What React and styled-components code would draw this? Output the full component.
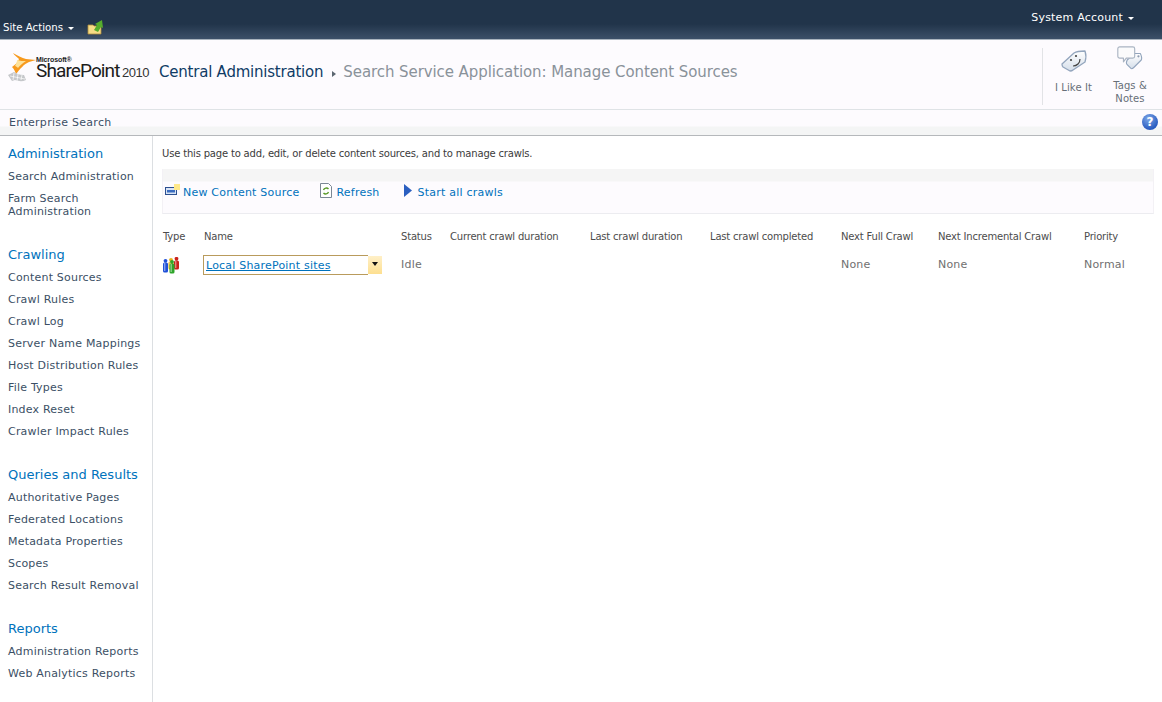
import React from "react";
import styled, { createGlobalStyle } from "styled-components";

const GlobalStyle = createGlobalStyle`
  html, body {
    margin: 0;
    padding: 0;
    background: #fff;
  }
  body {
    font-family: "DejaVu Sans", Verdana, sans-serif;
    font-size: 11px;
    color: #3b4f65;
  }
`;

const Page = styled.div`
  width: 1162px;
  height: 702px;
  display: flex;
  flex-direction: column;
  overflow: hidden;
`;

const TopBar = styled.div`
  height: 39px;
  flex: none;
  display: flex;
  justify-content: space-between;
  background: linear-gradient(#21344a 0, #21344a 24px, #3c5068 39px);
  border-bottom: 1px solid #a9b3bd;
  color: #fff;
`;

const SiteActions = styled.div`
  display: flex;
  align-items: flex-start;
  padding: 21px 0 0 3px;
  gap: 13px;
  font-size: 10.2px;
`;

const MenuLabel = styled.span`
  display: inline-flex;
  align-items: center;
  gap: 5px;
  line-height: 14px;
  white-space: nowrap;
`;

const Caret = styled.i`
  width: 0;
  height: 0;
  border-left: 3px solid transparent;
  border-right: 3px solid transparent;
  border-top: 3px solid #fff;
`;

const Account = styled.div`
  padding: 11px 28px 0 0;
  font-size: 11px;
  letter-spacing: 0.2px;
`;

const TitleRow = styled.div`
  height: 69px;
  flex: none;
  display: flex;
  background: #fdfbfe;
  border-bottom: 1px solid #dfe3e6;
`;

const Brand = styled.div`
  width: 1042px;
  flex: none;
  display: flex;
  align-items: flex-start;
  padding: 12px 0 0 8px;
  box-sizing: border-box;
`;

const LogoText = styled.div`
  position: relative;
  width: 113px;
  height: 30px;
  color: #1c1c1c;
`;

const LogoSmall = styled.span`
  position: absolute;
  left: 0;
  top: 4px;
  font: bold 7px/7px "Liberation Sans", sans-serif;
  letter-spacing: -0.1px;
`;

const LogoMain = styled.span`
  position: absolute;
  left: 0;
  top: 11px;
  font: 19px/15px Roboto, sans-serif;
  letter-spacing: -0.9px;
`;

const LogoYear = styled.span`
  position: absolute;
  left: 86px;
  top: 14px;
  font: 13px/13px "Liberation Sans", sans-serif;
  letter-spacing: -0.5px;
  color: #333;
`;

const Crumbs = styled.div`
  display: flex;
  align-items: center;
  margin: 8px 0 0 10px;
  font-size: 15px;
  line-height: 24px;
  white-space: nowrap;
  color: #8a929a;
  letter-spacing: -0.08px;
`;

const CrumbLink = styled.span`
  color: #0f3c66;
  letter-spacing: -0.22px;
`;

const CrumbArrow = styled.i`
  width: 0;
  height: 0;
  margin: 3px 7px 0 9px;
  border-top: 3.5px solid transparent;
  border-bottom: 3.5px solid transparent;
  border-left: 4px solid #5c6670;
`;

const Social = styled.div`
  display: flex;
  margin: 8px 0 4px;
  border-left: 1px solid #e2e3e6;
`;

const SocialItem = styled.div`
  width: ${(p) => p.$width}px;
  display: flex;
  flex-direction: column;
  align-items: center;
  text-align: center;
  font-size: 10px;
  line-height: 13px;
  letter-spacing: 0.1px;
  color: #676f78;
  box-sizing: border-box;
`;

const SocialIcon = styled.svg`
  width: 32px;
  height: 32px;
  margin: -3px 0 4px;
`;

const SubBar = styled.div`
  height: 25px;
  flex: none;
  display: flex;
  justify-content: space-between;
  padding: 0 4px 0 9px;
  background: linear-gradient(#fdfbfe 0, #fdfbfe 16px, #f4f5f5 17px, #f4f5f5 100%);
  border-bottom: 1px solid #b5b8bb;
  font-size: 11px;
  line-height: 25px;
  letter-spacing: 0.27px;
`;

const HelpButton = styled.div`
  width: 16px;
  height: 16px;
  margin-top: 4px;
  border-radius: 50%;
  background: radial-gradient(circle at 40% 30%, #7ea8e8, #2a5cc0 70%);
  color: #fff;
  font: bold 12px/16px "DejaVu Sans", sans-serif;
  letter-spacing: 0;
  text-align: center;
`;

const Body = styled.div`
  flex: 1;
  display: flex;
  min-height: 0;
`;

const SideNav = styled.nav`
  width: 152px;
  flex: none;
  border-right: 1px solid #dcdfe2;
  padding-top: 9px;
`;

const NavGroup = styled.div`
  margin-bottom: 24px;
`;

const NavHeading = styled.div`
  padding-left: 8px;
  font-size: 13px;
  line-height: 17px;
  color: #0072bc;
  margin-bottom: 4px;
`;

const NavItem = styled.div`
  padding: 4px 4px 4px 8px;
  line-height: 13px;
  margin-bottom: 1px;
  font-size: 11px;
  letter-spacing: 0.2px;
`;

const Main = styled.main`
  flex: 1;
  padding: 11px 8px 0 9px;
  min-width: 0;
`;

const Intro = styled.p`
  margin: 0 0 9px;
  font-size: 10px;
  line-height: 13px;
  letter-spacing: -0.18px;
  color: #3b3b3b;
`;

const Toolbar = styled.div`
  height: 45px;
  display: flex;
  align-items: flex-start;
  box-sizing: border-box;
  background: linear-gradient(#f5f5f5 0, #f5f5f5 12px, #fdfbfe 13px);
  border-bottom: 1px solid #ececf0;
  border-right: 1px solid #f3f1f5;
  border-left: 1px solid #f3f1f5;
  padding-top: 15px;
`;

const ToolButton = styled.div`
  display: flex;
  align-items: center;
  height: 16px;
  gap: ${(p) => p.$gap}px;
  margin-left: ${(p) => p.$left}px;
  color: #0072bc;
  font-size: 11px;
  letter-spacing: 0.22px;
  white-space: nowrap;
`;

const ToolIcon = styled.svg`
  flex: none;
  margin-top: -4px;
`;

const Grid = styled.table`
  border-collapse: collapse;
  table-layout: fixed;
  width: 993px;
  margin-top: 12px;
  font-size: 10px;
`;

const HeadCell = styled.th`
  height: 20px;
  padding: 0 0 0 1px;
  text-align: left;
  font-weight: normal;
  letter-spacing: -0.19px;
  color: #4c4c4c;
  white-space: nowrap;
`;

const Cell = styled.td`
  height: 36px;
  padding: 0 0 0 1px;
  font-size: 11px;
  letter-spacing: 0.2px;
  color: #707070;
  white-space: nowrap;
`;

const NameBox = styled.div`
  display: flex;
  width: 179px;
  height: 20px;
  margin: 2px 0 0 -1px;
`;

const NameField = styled.div`
  flex: 1;
  border: 1px solid #b99b5c;
  border-right: none;
  background: #fff;
  padding-left: 2px;
  line-height: 19px;
  font-size: 11px;
  color: #0072bc;
  text-decoration: underline;
`;

const NameMenu = styled.div`
  width: 14px;
  margin: 1px 0;
  background: linear-gradient(#fff0c8, #fddf90);
  display: flex;
  align-items: flex-start;
  justify-content: center;
  padding-top: 6px;
  box-sizing: border-box;
`;

const MenuCaret = styled.i`
  width: 0;
  height: 0;
  border-left: 3px solid transparent;
  border-right: 3px solid transparent;
  border-top: 4px solid #111;
`;

const FolderSvg = styled.svg`
  margin-top: -2px;
`;

const PeopleSvg = styled.svg`
  display: block;
  margin-top: 2px;
`;

const navGroups = [
  { title: "Administration", items: ["Search Administration", "Farm Search Administration"] },
  {
    title: "Crawling",
    items: ["Content Sources", "Crawl Rules", "Crawl Log", "Server Name Mappings", "Host Distribution Rules", "File Types", "Index Reset", "Crawler Impact Rules"],
  },
  {
    title: "Queries and Results",
    items: ["Authoritative Pages", "Federated Locations", "Metadata Properties", "Scopes", "Search Result Removal"],
  },
  { title: "Reports", items: ["Administration Reports", "Web Analytics Reports"] },
];

const columns = [
  ["Type", 41],
  ["Name", 197],
  ["Status", 49],
  ["Current crawl duration", 140],
  ["Last crawl duration", 120],
  ["Last crawl completed", 131],
  ["Next Full Crawl", 97],
  ["Next Incremental Crawl", 146],
  ["Priority", 72],
];

const FolderUp = () => (
  <FolderSvg width="17" height="16" viewBox="0 0 17 16">
    <path d="M1 6h5l1 1h7v8H1z" fill="#f6dc86" stroke="#b08d3c" strokeWidth="0.8" />
    <path d="M7 11l3-5-2-1 7-4 1 8-2-1-3 5z" fill="#56ad2c" />
  </FolderSvg>
);

const SharePointMark = () => (
  <svg width="28" height="30" viewBox="0 0 28 30">
    <path d="M5 1c4 2 9 5 13 6l10 1-7 2c-5 2-9 7-13 12-1-3-2-5-4-7 3-2 6-5 7-8-2-2-5-4-6-6z" fill="#f79a1e" />
    <path d="M9 8c3 1 6 1 9 1-3 2-6 4-8 7-1-1-2-2-3-2 1-2 2-4 2-6z" fill="#fde29a" />
    <path d="M0 23l6-3c2 1 5 3 10 3l2 5c-4 2-8 1-11 0l-3 1z" fill="#c5c7ca" />
    <path d="M2 24l15 3M6 21l-1 7M10 22l-1 7M14 23l-1 5" stroke="#fff" strokeWidth="0.7" />
  </svg>
);

const LikeIcon = () => (
  <SocialIcon viewBox="0 0 32 32">
    <defs>
      <linearGradient id="tagFill" x1="0" y1="0" x2="0" y2="1">
        <stop offset="0" stopColor="#ffffff" />
        <stop offset="1" stopColor="#d5deea" />
      </linearGradient>
    </defs>
    <path d="M4 19L16 8c3-2 7-2 11-2 1 3 1 8 0 11L15 25c-1 1-2 1-3 1l-7-4c-1-1-1-2-1-3z" fill="url(#tagFill)" stroke="#93a5bd" strokeWidth="1.3" strokeLinejoin="round" />
    <circle cx="13" cy="15" r="1.1" fill="#444" />
    <circle cx="18" cy="11" r="1.1" fill="#444" />
    <path d="M15 21c4 0 7-3 7-7" fill="none" stroke="#444" strokeWidth="1.2" />
  </SocialIcon>
);

const TagsIcon = () => (
  <SocialIcon viewBox="0 0 32 32">
    <path d="M13 16l8-7 6 0c1 2 2 5 1 7l-8 8c-1 1-2 2-3 1l-4-4c-1-1-1-3 0-5z" fill="url(#tagFill)" stroke="#93a5bd" strokeWidth="1.2" strokeLinejoin="round" />
    <circle cx="25" cy="12" r="1.2" fill="#8d9bb0" />
    <path d="M5 2h14c1 0 2 1 2 2v8c0 1-1 2-2 2H12l-3 4v-4H5c-1 0-2-1-2-2V4c0-1 1-2 2-2z" fill="#fbfbfc" stroke="#a9b4c2" strokeWidth="1.2" strokeLinejoin="round" />
  </SocialIcon>
);

const NewSourceIcon = () => (
  <ToolIcon width="15" height="12" viewBox="0 0 15 12">
    <rect x="0.5" y="3.5" width="11" height="7" fill="#d9e4f5" stroke="#2c4f90" />
    <rect x="2" y="6" width="8" height="2.5" fill="#3b6cc0" />
    <rect x="9" y="0" width="6" height="6" fill="#ffe98a" />
  </ToolIcon>
);

const RefreshIcon = () => (
  <ToolIcon width="12" height="15" viewBox="0 0 12 15">
    <path d="M.5.5h8l3 3v11H.5z" fill="#fff" stroke="#7b8794" />
    <path d="M3.5 7a3 3 0 0 1 5-1M8.5 9a3 3 0 0 1-5 1" fill="none" stroke="#5a9a28" strokeWidth="1.4" />
  </ToolIcon>
);

const PlayIcon = () => (
  <ToolIcon width="8" height="13" viewBox="0 0 8 13">
    <path d="M0 0l8 6.5-8 6.5z" fill="#2b5fc0" />
  </ToolIcon>
);

const Figure = ({ x, y, h, color }) => (
  <g>
    <circle cx={x + 2.5} cy={y + 1.8} r="1.9" fill={color} />
    <rect x={x} y={y + 3.5} width="5" height={h} rx="1.6" fill={color} />
    <rect x={x + 1} y={y + 4} width="1.4" height={h - 2} fill="#fff" opacity="0.45" />
  </g>
);

const PeopleIcon = () => (
  <PeopleSvg width="17" height="17" viewBox="0 0 17 17">
    <Figure x={11} y={0} h={9} color="#c9231c" />
    <Figure x={5.5} y={1} h={8} color="#e8b21c" />
    <Figure x={0} y={2} h={10} color="#1f50d8" />
    <Figure x={6.5} y={3} h={10} color="#2ea52a" />
  </PeopleSvg>
);

export default function App() {
  return (
    <Page>
      <GlobalStyle />
      <TopBar>
        <SiteActions>
          <MenuLabel>
            Site Actions <Caret />
          </MenuLabel>
          <FolderUp />
        </SiteActions>
        <Account>
          <MenuLabel>
            System Account <Caret />
          </MenuLabel>
        </Account>
      </TopBar>
      <TitleRow>
        <Brand>
          <SharePointMark />
          <LogoText>
            <LogoSmall>Microsoft®</LogoSmall>
            <LogoMain>SharePoint</LogoMain>
            <LogoYear>2010</LogoYear>
          </LogoText>
          <Crumbs>
            <CrumbLink>Central Administration</CrumbLink>
            <CrumbArrow />
            Search Service Application: Manage Content Sources
          </Crumbs>
        </Brand>
        <Social>
          <SocialItem $width={61}>
            <LikeIcon />
            I Like It
          </SocialItem>
          <SocialItem $width={52}>
            <TagsIcon />
            Tags &amp; Notes
          </SocialItem>
        </Social>
      </TitleRow>
      <SubBar>
        Enterprise Search
        <HelpButton>?</HelpButton>
      </SubBar>
      <Body>
        <SideNav>
          {navGroups.map((group) => (
            <NavGroup key={group.title}>
              <NavHeading>{group.title}</NavHeading>
              {group.items.map((item) => (
                <NavItem key={item}>{item}</NavItem>
              ))}
            </NavGroup>
          ))}
        </SideNav>
        <Main>
          <Intro>Use this page to add, edit, or delete content sources, and to manage crawls.</Intro>
          <Toolbar>
            <ToolButton $left={2} $gap={3}>
              <NewSourceIcon />
              New Content Source
            </ToolButton>
            <ToolButton $left={21} $gap={4}>
              <RefreshIcon />
              Refresh
            </ToolButton>
            <ToolButton $left={24} $gap={6}>
              <PlayIcon />
              Start all crawls
            </ToolButton>
          </Toolbar>
          <Grid>
            <colgroup>
              {columns.map(([label, width]) => (
                <col key={label} width={width} />
              ))}
            </colgroup>
            <thead>
              <tr>
                {columns.map(([label]) => (
                  <HeadCell key={label}>{label}</HeadCell>
                ))}
              </tr>
            </thead>
            <tbody>
              <tr>
                <Cell>
                  <PeopleIcon />
                </Cell>
                <Cell>
                  <NameBox>
                    <NameField>Local SharePoint sites</NameField>
                    <NameMenu>
                      <MenuCaret />
                    </NameMenu>
                  </NameBox>
                </Cell>
                <Cell>Idle</Cell>
                <Cell />
                <Cell />
                <Cell />
                <Cell>None</Cell>
                <Cell>None</Cell>
                <Cell>Normal</Cell>
              </tr>
            </tbody>
          </Grid>
        </Main>
      </Body>
    </Page>
  );
}
